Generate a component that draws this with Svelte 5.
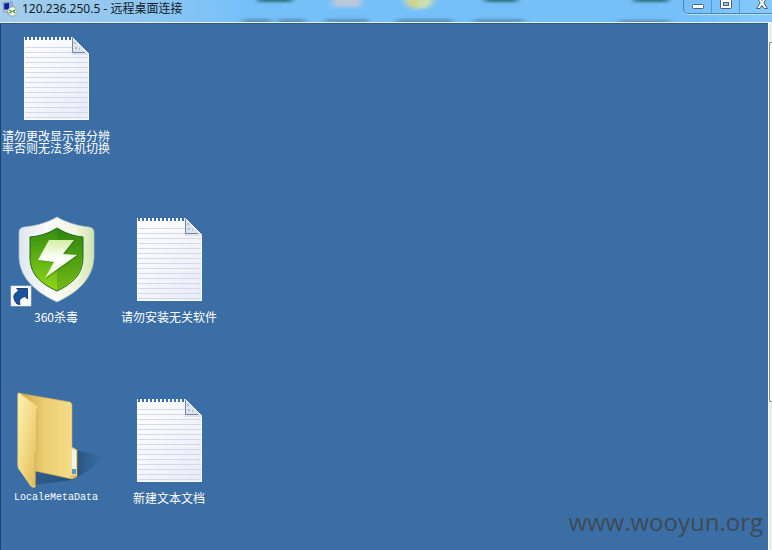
<script>
  const items = [
    { kind: 'doc', label: '请勿更改显示器分辨率否则无法多机切换', col: 1, row: 1 },
    { kind: 'shield', label: '360杀毒', col: 1, row: 2 },
    { kind: 'doc', label: '请勿安装无关软件', col: 2, row: 2 },
    { kind: 'folder', label: 'LocaleMetaData', col: 1, row: 3 },
    { kind: 'doc', label: '新建文本文档', col: 2, row: 3 },
  ];
  const rules = Array.from({ length: 15 }, (_, i) => 17 + i * 5);
  const holes = Array.from({ length: 12 }, (_, i) => 17 + i * 4);
</script>

<div class="window">
  <header class="titlebar">
    <svg class="glass" width="772" height="22" viewBox="0 0 772 22" aria-hidden="true">
      <defs>
        <filter id="soft" x="-50%" y="-200%" width="200%" height="500%"><feGaussianBlur stdDeviation="3 1.5" /></filter>
      </defs>
      <g filter="url(#soft)">
        <rect x="258" y="-4" width="34" height="6" fill="#2b6d78" />
        <rect x="333" y="-4" width="28" height="11" fill="#b9c9dc" />
        <ellipse cx="419" cy="1" rx="14" ry="8" fill="#cbe0b0" />
        <ellipse cx="413" cy="3" rx="4" ry="4" fill="#d2c978" />
        <rect x="485" y="-4" width="32" height="6" fill="#2b6d78" />
        <rect x="634" y="-4" width="34" height="6" fill="#2b6d78" />
        <g fill="#4b7192" opacity=".6">
          <rect x="243" y="19" width="28" height="5" />
          <rect x="278" y="19" width="27" height="5" />
          <rect x="325" y="19" width="44" height="4" />
          <rect x="396" y="19" width="57" height="5" />
          <rect x="474" y="19" width="50" height="4" />
          <rect x="618" y="20" width="52" height="4" />
        </g>
      </g>
    </svg>
    <svg class="app" width="16" height="16" viewBox="0 0 16 16" aria-hidden="true">
      <path d="M1 2l9-1 1 9-9 1z" fill="#d9dfe7" stroke="#68788e" stroke-width=".7" />
      <path d="M2 2.600l5-.6.4 6.400-5 .4z" fill="#0b1fa0" />
      <path d="M7 2l2.500-.2.5 6.500-2.600.1z" fill="#8fa8dc" />
      <path d="M4 12l5-.5v2L5 14z" fill="#aeb6c1" />
      <circle cx="10.500" cy="10.500" r="4.700" fill="#f3f6ee" stroke="#88918e" stroke-width=".8" />
      <path d="M7.500 9l2 1.500-2 1.800M13.500 8.500l-2.300 1.700 2.300 2" fill="none" stroke="#3f9a3a" stroke-width="1.300" />
    </svg>
    <h1>120.236.250.5 - 远程桌面连接</h1>
    <div class="controls">
      <button class="min" aria-label="最小化">
        <svg width="14" height="11" viewBox="0 0 14 11"><rect x="1.500" y="4.500" width="11" height="4" rx="1" fill="#fff" stroke="#4d5f78" /></svg>
      </button>
      <button class="max" aria-label="最大化">
        <svg width="14" height="11" viewBox="0 0 14 11">
          <rect x="1.500" y="-2.500" width="11" height="11" rx="1" fill="#fff" stroke="#4d5f78" />
          <rect x="4.500" y="2.500" width="5" height="3" fill="#8ccaf6" stroke="#4d5f78" />
        </svg>
      </button>
      <button class="close" aria-label="关闭">
        <svg width="14" height="11" viewBox="0 0 14 11"><path d="M2-2.500h3L7 .5l2-3h3L8.800 3l3.700 5.500h-3.500L7 5.500 5 8.500H1.500L5.200 3z" fill="#fff" stroke="#4d5f78" /></svg>
      </button>
    </div>
  </header>

  <div class="body">
    <main class="desktop">
      {#each items as item}
        <button class="item" style="grid-column: {item.col}; grid-row: {item.row}">
          <svg width="96" height="96" viewBox="0 0 96 96" aria-hidden="true">
            {#if item.kind === 'doc'}
              <defs>
                <linearGradient id="paper" x1="0" y1="0" x2="1" y2="1">
                  <stop offset="0" stop-color="#fff" /><stop offset=".4" stop-color="#f7f8fc" /><stop offset="1" stop-color="#e8eaf7" />
                </linearGradient>
              </defs>
              <path d="M16 7h48l17 17v66H16z" fill="url(#paper)" />
              <g stroke="#d3d8ea" stroke-width="1">
                {#each rules as y}
                  <path d="M17 {y}.5H{y < 26 ? 64 : 80}" />
                {/each}
              </g>
              <g fill="#3a6ea5">
                {#each holes as x}
                  <rect {x} y="7" width="2" height="3" />
                {/each}
              </g>
              <path d="M16.500 9v80.500h64V24" fill="none" stroke="#fff" opacity=".8" />
              <path d="M64 7l17 17v1H64z" fill="#dde4ee" />
              <path d="M64.500 8v14.500H77" fill="none" stroke="#7288a4" />
              <path d="M65 8l16 16" stroke="#f7fafe" />
              <path d="M67 12v2M67 18h2M71 19h1" stroke="#8293aa" />
            {:else if item.kind === 'shield'}
              <defs>
                <linearGradient id="rim" x1="0" y1="0" x2="1" y2="0">
                  <stop offset="0" stop-color="#dfe6ec" /><stop offset=".4" stop-color="#fbfcfd" /><stop offset=".75" stop-color="#f0f6df" /><stop offset="1" stop-color="#cfe4ac" />
                </linearGradient>
                <linearGradient id="green" x1="0" y1="0" x2="0" y2="1">
                  <stop offset="0" stop-color="#338c10" /><stop offset=".45" stop-color="#5cb012" /><stop offset="1" stop-color="#94d51b" />
                </linearGradient>
                <linearGradient id="bolt" x1="0" y1="0" x2="0" y2="1">
                  <stop offset="0" stop-color="#d6eea6" /><stop offset=".5" stop-color="#fff" /><stop offset="1" stop-color="#e4f5c4" />
                </linearGradient>
              </defs>
              <path d="M49 6C57 11 70 15 81 16Q86 17 86 21V45C86 66 71 81 49 91 27 81 11 66 11 45V21Q11 17 16 16C28 15 41 11 49 6z" fill="url(#rim)" stroke="#a9bdce" stroke-width=".7" />
              <path d="M49 17C57 22 65 25 75 26V46C75 62 66 72 49 80 31 72 22 62 22 46V26C33 25 41 22 49 17z" fill="url(#green)" stroke="#1c651a" stroke-width="1" />
              <path d="M49 18C57 23 65 26 74 27V46C74 61 65 71 49 79z" fill="#236e0e" opacity=".28" />
              <path d="M41 29H66L55 43 69 44 37 67 46 51 30 49z" fill="#286b10" opacity=".45" transform="translate(1 1)" />
              <path d="M41 29H66L55 43 69 44 37 67 46 51 30 49z" fill="url(#bolt)" />
              <rect x="3" y="75" width="20" height="20" fill="#fff" stroke="#d2dbe5" stroke-width=".6" />
              <path d="M9 93C4 87 5 82 11 80L8.500 77.500H19.500V88L17 85.500C12 87 11 89 12 93.500z" fill="#15559f" stroke="#0a2753" stroke-width=".8" />
            {:else}
              <defs>
                <linearGradient id="back" x1="0" y1="0" x2="1" y2="0">
                  <stop offset="0" stop-color="#caa444" /><stop offset=".45" stop-color="#ebcd72" /><stop offset="1" stop-color="#f8df8e" />
                </linearGradient>
                <linearGradient id="front" x1="0" y1="0" x2="1" y2="1">
                  <stop offset="0" stop-color="#fff1b3" /><stop offset=".5" stop-color="#f2d984" /><stop offset="1" stop-color="#dfb950" />
                </linearGradient>
                <linearGradient id="shade" x1="0" y1="0" x2="1" y2="0">
                  <stop offset="0" stop-color="#1c3e65" stop-opacity=".4" /><stop offset=".6" stop-color="#1c3e65" stop-opacity=".6" /><stop offset="1" stop-color="#28527f" stop-opacity=".1" />
                </linearGradient>
              </defs>
              <path d="M68 58L94 65 83 77 64 88 27 93V78z" fill="url(#shade)" />
              <path d="M10 1L62 10Q64 11 64 13V55L69 58V84L64 87 27 79 10 73z" fill="url(#back)" stroke="#d0ac50" stroke-width=".6" />
              <path d="M64 57l4 2v22h-4z" fill="#eef4ef" />
              <path d="M64 77h4v5h-4z" fill="#5799c4" />
              <path d="M62 84l7-1v2l-5 2z" fill="#dfbd59" />
              <path d="M11 1L27 13Q29 15 29 17V60L27 62V95Q25 96 23 94L11 77Q10 76 10 74V2z" fill="url(#front)" stroke="#f6dc8c" stroke-width=".8" />
              <path d="M29 17V60L27 62V94" fill="none" stroke="#c79e3f" stroke-width=".8" />
            {/if}
          </svg>
          <span class:latin={item.kind === 'folder'}>{item.label}</span>
        </button>
      {/each}
      <p class="watermark">www.wooyun.org</p>
    </main>
    <div class="scroll"><div class="thumb"></div></div>
  </div>
</div>

<style>
  :global(body) { margin: 0; }
  .window {
    display: flex;
    flex-direction: column;
    min-height: 100vh;
    overflow: hidden;
    font-family: "Noto Sans", "Noto Sans CJK SC", sans-serif;
    font-size: 12px;
  }
  .titlebar {
    position: relative;
    display: flex;
    align-items: flex-start;
    height: 22px;
    overflow: hidden;
    background: linear-gradient(90deg, #a5cdea, #8fc6f0 18%, #76c0fa 32%, #76c0fa 90%, #86cafb);
    border-bottom: 1px solid #e4f3fd;
  }
  .glass { position: absolute; left: 0; top: 0; }
  .app { position: relative; margin: 1px 4px 0 2px; }
  h1 {
    position: relative;
    flex: 1;
    margin: 0;
    font-size: 12px;
    font-weight: 400;
    line-height: 18px;
    color: #101c28;
  }
  .controls {
    position: relative;
    display: flex;
    height: 13px;
    border: 1px solid #4f86b2;
    border-width: 0 0 1px 1px;
    border-radius: 0 0 0 5px;
    box-shadow: 0 1px 0 #b5e1ff;
  }
  button {
    padding: 0;
    border: 0;
    background: none;
    font: inherit;
    color: inherit;
  }
  .controls button {
    display: flex;
    justify-content: center;
    width: 28px;
    border-right: 1px solid #5c98c4;
    box-sizing: border-box;
  }
  .controls .close {
    width: 32px;
    border: 0;
    justify-content: flex-end;
    padding-right: 3px;
  }
  .body { flex: 1; display: flex; }
  .desktop {
    position: relative;
    flex: 1;
    display: grid;
    grid-template-columns: 112px 112px;
    grid-template-rows: 181px 181px auto;
    column-gap: 1px;
    align-content: start;
    padding-top: 6px;
    background: #3a6ea5;
    border-top: 1px solid #365a80;
    box-shadow: inset 1px 0 0 #1f436f;
  }
  .item {
    display: flex;
    flex-direction: column;
    align-items: center;
    gap: 4px;
    color: #fff;
  }
  .item span {
    width: 108px;
    font-family: "Noto Sans CJK SC", sans-serif;
    line-height: 12px;
    text-align: center;
  }
  .item .latin {
    font-family: "Liberation Mono", monospace;
    font-size: 10px;
  }
  .watermark {
    position: absolute;
    right: 5px;
    bottom: 12px;
    margin: 0;
    font-family: "Open Sans", "Noto Sans", sans-serif;
    font-size: 24px;
    line-height: 32px;
    color: #3d4a55;
  }
  .scroll {
    width: 3px;
    padding-top: 19px;
    background: #ececec;
    border-left: 1px solid #fff;
  }
  .thumb {
    height: 360px;
    background: #fafafa;
    border: 1px solid #8c8c8c;
    border-right: 0;
    border-radius: 2px 0 0 2px;
    box-sizing: border-box;
  }
</style>
